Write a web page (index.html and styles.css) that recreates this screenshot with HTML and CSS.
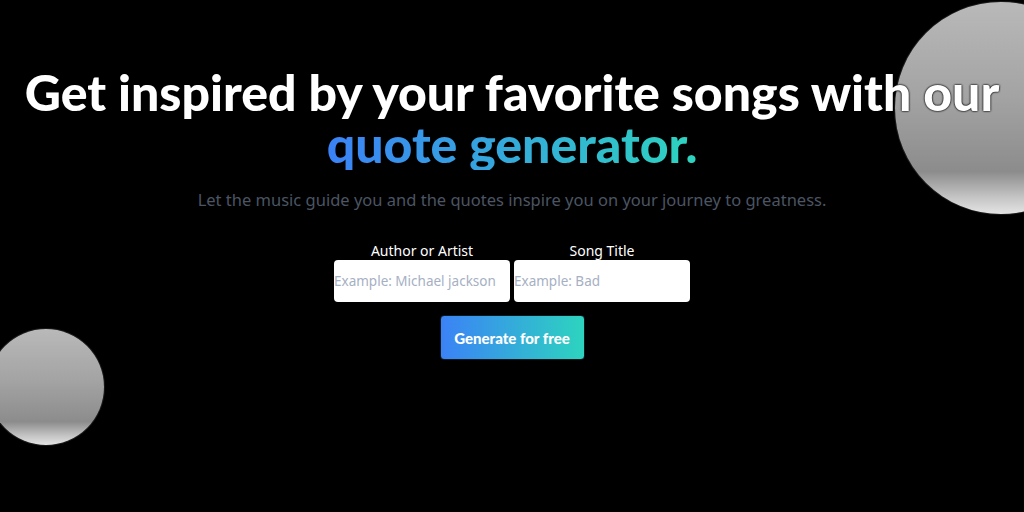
FILE: index.html
```html
<!DOCTYPE html>
<html lang="en">
<head>
<meta charset="utf-8">
<title>Quote generator</title>
<link rel="stylesheet" href="styles.css">
</head>
<body>
<div class="orb orb-right"></div>
<div class="orb orb-left"></div>
<main class="hero">
  <h1 class="title">Get inspired by your favorite songs with our <span class="grad">quote generator.</span></h1>
  <p class="subtitle">Let the music guide you and the quotes inspire you on your journey to greatness.</p>
  <form class="form">
    <div class="fields">
      <label class="field">
        <span class="label">Author or Artist</span>
        <input class="input" type="text" placeholder="Example: Michael jackson">
      </label>
      <label class="field">
        <span class="label">Song Title</span>
        <input class="input" type="text" placeholder="Example: Bad">
      </label>
    </div>
    <button class="btn" type="button">Generate for free</button>
  </form>
</main>
</body>
</html>
```
FILE: styles.css
```css
* { box-sizing: border-box; }
html, body { margin: 0; height: 100%; }
body {
  background: #000;
  color: #fff;
  font-family: "Noto Sans", "DejaVu Sans", sans-serif;
  overflow: hidden;
  position: relative;
}
.orb {
  position: absolute;
  border-radius: 50%;
  background: linear-gradient(180deg, #b9b9b9 0%, #a3a3a3 45%, #8c8c8c 80%, #c4c4c4 92%, #e4e4e4 100%);
  box-shadow: 0 0 0 1px #1a1a1a;
  z-index: 0;
}
.orb-right { width: 212px; height: 212px; left: 895px; top: 2px; }
.orb-left { width: 116px; height: 116px; left: -12px; top: 329px; }
.hero {
  position: relative;
  z-index: 1;
  display: flex;
  flex-direction: column;
  align-items: center;
  padding-top: 66px;
}
.title {
  margin: 0;
  font-family: "Lato", sans-serif;
  font-weight: 900;
  font-size: 50px;
  line-height: 52px;
  letter-spacing: 0;
  text-align: center;
  text-shadow: 0 0 2px #000, 0 0 2px #000;
}
.grad {
  display: block;
  background: linear-gradient(90deg, #3b82f6, #2dd4bf);
  -webkit-background-clip: text;
  background-clip: text;
  color: transparent;
  text-shadow: none;
  width: max-content;
  margin: 0 auto;
}
.subtitle {
  margin: 18px 0 0;
  font-size: 16.5px;
  color: #4b5563;
}
.form {
  margin-top: 30px;
  display: flex;
  flex-direction: column;
  align-items: center;
  gap: 13px;
}
.fields { display: flex; gap: 4px; }
.field { display: flex; flex-direction: column; align-items: center; }
.label { font-size: 14px; line-height: 19px; color: #fff; }
.input {
  width: 176px;
  height: 42px;
  border: none;
  border-radius: 4px;
  background: #fff;
  padding: 0;
  font-family: "Noto Sans", sans-serif;
  font-size: 13.5px;
  outline: none;
}
.input::placeholder { color: #a6b0c3; }
.btn {
  width: 145px;
  height: 45px;
  border: 1px solid #0c1a20;
  border-radius: 4px;
  background: linear-gradient(90deg, #3b82f6, #2dd4bf);
  color: #fff;
  font-family: "Lato", sans-serif;
  font-weight: 900;
  font-size: 15px;
  cursor: pointer;
}
```
